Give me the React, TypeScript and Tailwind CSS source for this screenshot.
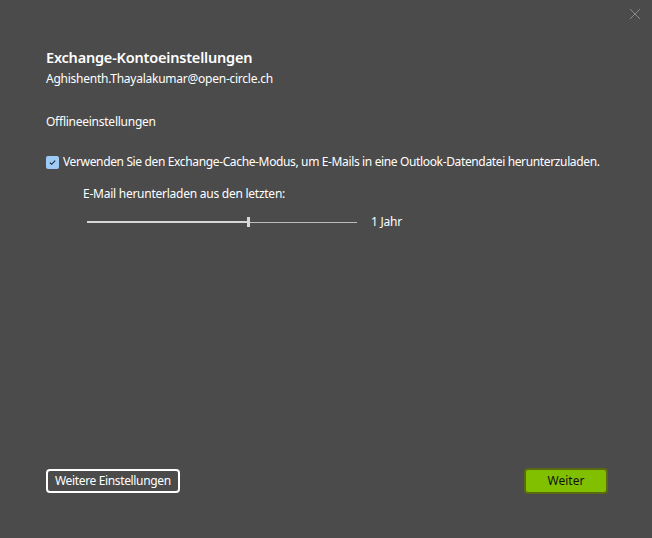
import React from 'react';

const font = { fontFamily: '"Noto Sans", "Open Sans", sans-serif' };

export default function App() {
    return (
        <div className="relative w-[652px] h-[538px] bg-[#4b4b4b] text-white overflow-hidden" style={font}>
            {/* Close */}
            <button className="absolute right-[9px] top-[7px] w-[14px] h-[14px] text-[#8a8a8a]">
                <svg viewBox="0 0 12 12" className="w-[12px] h-[12px]">
                    <path d="M1 1 L11 11 M11 1 L1 11" stroke="currentColor" strokeWidth="1" fill="none" />
                </svg>
            </button>

            <div className="flex flex-col h-full pl-[46px] pr-[20px] pt-[46px] pb-[44px] whitespace-nowrap">
                <h1 className="text-[14.5px] leading-[22px] font-semibold tracking-[-0.2px]">Exchange-Kontoeinstellungen</h1>
                <p className="text-[12px] leading-[18px] mt-[2px] tracking-[-0.25px]">Aghishenth.Thayalakumar@open-circle.ch</p>

                <p className="text-[12px] leading-[18px] mt-[25px] tracking-[-0.25px]">Offlineeinstellungen</p>

                <label className="flex items-center gap-[4px] mt-[22px]">
                    <span className="w-[13px] h-[13px] rounded-[2px] bg-[#9ecbf5] flex items-center justify-center">
                        <svg viewBox="0 0 10 10" className="w-[9px] h-[9px]">
                            <path d="M2 5.2 L4 7 L8 3" stroke="#1b2a3a" strokeWidth="1.3" fill="none" />
                        </svg>
                    </span>
                    <span className="text-[12px] leading-[18px] tracking-[-0.36px]">
                        Verwenden Sie den Exchange-Cache-Modus, um E-Mails in eine Outlook-Datendatei herunterzuladen.
                    </span>
                </label>

                <div className="pl-[37px] mt-[14px]">
                    <p className="text-[12px] leading-[18px] tracking-[-0.25px]">E-Mail herunterladen aus den letzten:</p>
                    <div className="flex items-center mt-[10px]">
                        <div className="relative w-[270px] h-[12px] ml-[4px] flex items-center">
                            <div className="h-[2px] w-[161px] bg-[#d6d6d6]" />
                            <div className="h-[1px] flex-1 bg-[#bdbdbd]" />
                            <div className="absolute left-[160px] top-[1px] w-[3px] h-[10px] bg-[#d8d8d8]" />
                        </div>
                        <span className="text-[12px] leading-[18px] ml-[14px] tracking-[-0.25px]">1 Jahr</span>
                    </div>
                </div>

                <div className="mt-auto flex justify-between items-center pr-[25px]">
                    <button className="h-[24px] px-[7px] rounded-[4px] border-2 border-white text-[12px] leading-[18px] bg-[#4b4b4b] tracking-[-0.35px]">
                        Weitere Einstellungen
                    </button>
                    <button className="h-[26px] w-[84px] rounded-[4px] border-2 border-[#5a6a10] bg-[#80c000] text-[#111] text-[12px] leading-[18px] -mr-[1px]">
                        Weiter
                    </button>
                </div>
            </div>
        </div>
    );
}
